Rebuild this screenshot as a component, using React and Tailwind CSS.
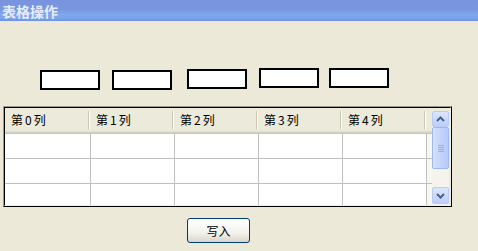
import React from "react";

const cols = [
  { label: "0", w: "w-[86px]" },
  { label: "1", w: "w-[84px]" },
  { label: "2", w: "w-[84px]" },
  { label: "3", w: "w-[84px]" },
  { label: "4", w: "w-[84px]" },
];

function Chevron({ up }) {
  return (
    <svg width="9" height="6" viewBox="0 0 9 6">
      <path
        d={up ? "M1 5 L4.5 1.5 L8 5" : "M1 1 L4.5 4.5 L8 1"}
        fill="none"
        stroke="#4d6185"
        strokeWidth="2"
      />
    </svg>
  );
}

export default function App() {
  const font = { fontFamily: '"Noto Sans CJK SC", "Liberation Sans", sans-serif' };
  return (
    <div className="w-[478px] h-[251px] bg-[#ece9d8] flex flex-col overflow-hidden" style={font}>
      {/* title bar */}
      <div className="h-[21px] bg-[linear-gradient(to_bottom,#7894de_0%,#7896e0_45%,#7ea8ec_70%,#7ba3ea_88%,#6f8edd_100%)] flex items-center pl-[2px]">
        <span className="text-[14px] leading-[14px] font-bold text-[#e6ecfa] tracking-[0px]">表格操作</span>
      </div>

      {/* text boxes */}
      <div className="mt-[47px] h-[22px] flex items-start pl-[40px]">
        <div className="w-[60px] h-[20px] mt-[2px] bg-white border-2 border-black" />
        <div className="w-[60px] h-[20px] mt-[2px] ml-[12px] bg-white border-2 border-black" />
        <div className="w-[60px] h-[20px] mt-[1px] ml-[15px] bg-white border-2 border-black" />
        <div className="w-[60px] h-[20px] ml-[12px] bg-white border-2 border-black" />
        <div className="w-[60px] h-[20px] ml-[10px] bg-white border-2 border-black" />
      </div>

      {/* grid */}
      <div className="mt-[16px] ml-[3px] w-[449px] h-[101px] border border-t-[#9d9a8c] border-l-[#9d9a8c] border-r-black border-b-black">
        <div className="w-full h-full border border-t-black border-l-black border-r-[#f1efe2] border-b-[#f1efe2] flex">
          <div className="flex flex-col w-[427px]">
            {/* header */}
            <div className="h-[26px] flex flex-col bg-[#ebeadb]">
              <div className="h-[23px] flex">
                {cols.map((c, i) => (
                  <div key={i} className={`${c.w} h-full flex items-center relative`}>
                    <span className={`text-[12px] leading-[14px] text-black ${i === 0 ? "pl-[6px]" : "pl-[5px]"}`}>
                      第<span className="px-[2px]">{c.label}</span>列
                    </span>
                    <div className="absolute right-[1px] top-[3px] bottom-[2px] w-[2px] flex">
                      <div className="w-[1px] h-full bg-[#c7c5b2]" />
                      <div className="w-[1px] h-full bg-white" />
                    </div>
                  </div>
                ))}
                <div className="flex-1" />
              </div>
              <div className="h-[1px] bg-[#e2decd]" />
              <div className="h-[1px] bg-[#d6d2c2]" />
              <div className="h-[1px] bg-[#cbc7b8]" />
            </div>
            {/* rows */}
            {[0, 1, 2].map((r) => (
              <div key={r} className={`flex ${r < 2 ? "h-[25px] border-b border-[#c0c0c0]" : "flex-1"}`}>
                {cols.map((c, i) => (
                  <div key={i} className={`${c.w} h-full bg-white border-r border-[#c0c0c0]`} />
                ))}
                <div className="flex-1 bg-[#f7f6f1]" />
              </div>
            ))}
          </div>
          {/* scrollbar */}
          <div className="w-[17px] flex flex-col bg-[#f4f3ec]">
            <div className="h-[3px] bg-[#ebeadb]" />
            <div className="h-[16px] rounded-[2px] border border-[#b9cbf4] bg-[linear-gradient(to_bottom,#dbe5fd,#bccffa)] flex items-center justify-center">
              <Chevron up />
            </div>
            <div className="h-[42px] rounded-[2px] border border-[#9fb7ef] bg-[linear-gradient(to_right,#d5e1fd,#c3d4fc,#b7cbf9)] flex flex-col items-center justify-center gap-[1px]">
              <div className="w-[6px] h-[1px] bg-[#8db0f6]" />
              <div className="w-[6px] h-[1px] bg-[#8db0f6]" />
              <div className="w-[6px] h-[1px] bg-[#8db0f6]" />
              <div className="w-[6px] h-[1px] bg-[#8db0f6]" />
            </div>
            <div className="flex-1" />
            <div className="h-[17px] mb-[1px] rounded-[2px] border border-[#b9cbf4] bg-[linear-gradient(to_bottom,#dbe5fd,#bccffa)] flex items-center justify-center">
              <Chevron />
            </div>
          </div>
          <div className="w-[1px]" />
        </div>
      </div>

      {/* button */}
      <div className="mt-[11px] ml-[187px]">
        <button className="w-[63px] h-[25px] rounded-[3px] border border-[#003c74] bg-[linear-gradient(to_bottom,#ffffff,#f3f2ec_60%,#d9d5c8)] flex items-center justify-center text-[12px] leading-[14px] text-black">
          写入
        </button>
      </div>
    </div>
  );
}
